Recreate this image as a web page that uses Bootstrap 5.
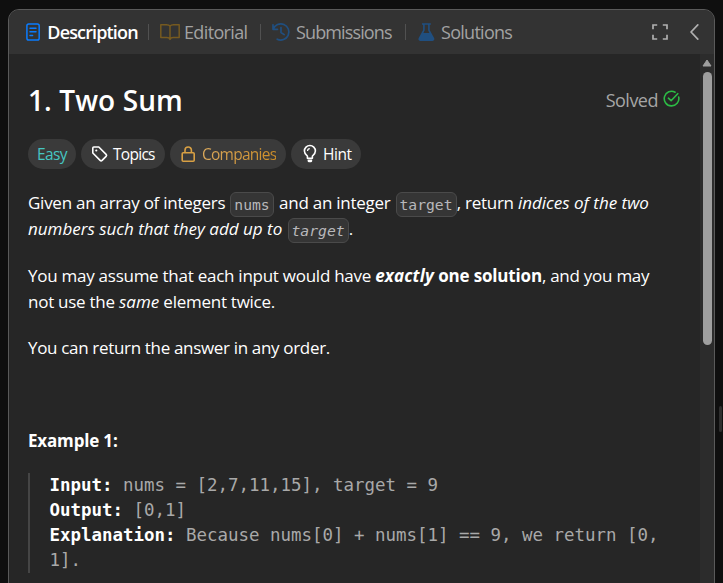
<!DOCTYPE html>
<html lang="en" data-bs-theme="dark">
<head>
<meta charset="utf-8">
<meta name="viewport" content="width=device-width, initial-scale=1">
<title>Two Sum</title>
<link href="https://cdn.jsdelivr.net/npm/bootstrap@5.3.0/dist/css/bootstrap.min.css" rel="stylesheet">
<script src="https://cdn.jsdelivr.net/npm/bootstrap@5.3.0/dist/js/bootstrap.bundle.min.js" defer></script>
<style>
  body { background: #0f0f0f; font-family: "Open Sans", "Noto Sans", sans-serif; color: #f5f5f5; height: 583px; }
  .frame { height: 583px; padding: 9px 0 0 8px; }
  .panel { width: 707px; height: 600px; background: #262626; border: 1px solid #5a5a5a; border-radius: 11px; }
  .tabs { height: 44px; flex: none; background: #333; padding: 0 11px 0 15px; }
  .tab { height: 44px; font-size: 18px; line-height: 44px; color: #a2a2a2; white-space: nowrap; }
  .tab.current { color: #fff; font-weight: 600; }
  .tab svg { flex: none; }
  .tab-description { width: 124px; letter-spacing: -.85px; }
  .tab-editorial { width: 111px; padding-left: 10px; letter-spacing: -.64px; }
  .tab-submissions { width: 144px; padding-left: 10px; letter-spacing: -.87px; }
  .tab-solutions { padding-left: 11px; letter-spacing: -.72px; }
  .sep { width: 1px; height: 16px; background: #515151; flex: none; }
  .content-col { padding: 0 0 0 19px; width: 691px; flex: none; }
  .title-row { padding: 28px 20px 0 0; }
  .track { width: 14px; background: #2c2c2c; padding-top: 5px; flex: none; }
  .thumb { width: 9px; height: 273px; margin-top: 5px; border-radius: 5px; background: #9f9f9f; }
  .heading { font-size: 28px; line-height: 36px; font-weight: 650; letter-spacing: .1px; }
  .solved { font-size: 18px; line-height: 24px; letter-spacing: -.5px; color: #a5a5a5; }
  .solved svg { margin: -4px 0 0 5px; }
  .chips { gap: 5px; margin-top: 21px; }
  .chip { height: 30px; border-radius: 15px; background: #3a3a3a; font-size: 15.5px; line-height: 31px; white-space: nowrap; color: #fff; padding-left: 10px; }
  .chip-easy { width: 48px; padding-left: 9px; color: #46c6c2; letter-spacing: -.6px; }
  .chip-topics { width: 84px; letter-spacing: -.72px; }
  .chip-companies { width: 116px; letter-spacing: -.75px; }
  .chip-hint { width: 70px; letter-spacing: -.47px; }
  .gold { color: transparent; background: linear-gradient(90deg, #dcaa5c, #cd8d27); -webkit-background-clip: text; background-clip: text; }
  .prose { margin-top: 21px; font-size: 17px; line-height: 26.2px; white-space: nowrap; letter-spacing: -.26px; color: #fff; }
  .prose p { margin-bottom: 20.3px; }
  .prose em { letter-spacing: 0; }
  .prose b { letter-spacing: -.17px; }
  .prose b em { letter-spacing: .15px; }
  .prose .token { display: inline-block; height: 25px; padding: 0 3px; border: 1px solid #4a4a4a; border-radius: 6px; background: #353535; color: #b8b8bb; font: 14.7px/24px "DejaVu Sans Mono", monospace; letter-spacing: 0; vertical-align: -1px; margin: -3px .1px -3px .9px; }
  .prose .gap-after { margin-right: 1.2px; }
  .prose em .token { font-style: italic; }
  .sample { border-left: 2px solid #454545; padding-left: 19.5px; margin: 0; font: 17.46px/25px "DejaVu Sans Mono", monospace; color: #a9a9a9; overflow: visible; }
  .sample b { color: #fff; }
  .grip { width: 3px; height: 26px; margin: 397px 0 0 4px; border-radius: 2px; background: #2e2e2e; }
</style>
</head>
<body class="overflow-hidden">
<div class="frame d-flex overflow-hidden">
  <main class="panel d-flex flex-column overflow-hidden flex-shrink-0">
    <nav class="tabs d-flex align-items-center">
      <a class="tab tab-description current d-flex align-items-center text-decoration-none">
        <svg width="18" height="20" viewBox="0 0 18 20" fill="none" stroke="#0a7cff" stroke-width="1.5" stroke-linecap="round"><rect x="2.9" y="1.9" width="12.3" height="16.2" rx="1.8"/><path d="M6 6.2h6M6 9.8h6M6 13.4h2.6"/></svg>
        <span style="padding-left:5.3px">Description</span></a>
      <span class="sep"></span>
      <a class="tab tab-editorial d-flex align-items-center text-decoration-none">
        <svg width="22" height="20" viewBox="0 0 22 20" fill="none" stroke="#765a20" stroke-width="1.5" stroke-linejoin="round"><path d="M11 4.2C10.3 3 9 2.7 7.4 2.7H1.8v12.9h6c1.6 0 2.6.4 3.2 1.8.6-1.4 1.6-1.8 3.2-1.8h6V2.7h-5.6c-1.6 0-2.9.3-3.6 1.5zM11 4.2v13.2"/></svg>
        <span style="padding-left:3px">Editorial</span></a>
      <span class="sep"></span>
      <a class="tab tab-submissions d-flex align-items-center text-decoration-none">
        <svg width="20" height="20" viewBox="0 0 20 20" fill="none" stroke="#204f80" stroke-width="1.7" stroke-linecap="round" stroke-linejoin="round"><path d="M2 2.8v4.5h4.5M2.2 7.1A8.1 8.1 0 1 1 6.2 17.2M10 5.6v4.9l3.2 2.1"/></svg>
        <span style="padding-left:5px">Submissions</span></a>
      <span class="sep"></span>
      <a class="tab tab-solutions d-flex align-items-center text-decoration-none">
        <svg width="19" height="20" viewBox="0 0 19 20"><path d="M5 1.2h8.8v1.5h-1.1v5.2l4.4 8.2c.7 1.4 0 2.8-1.5 2.8H3.2c-1.5 0-2.2-1.4-1.5-2.8l4.4-8.2V2.7H5z" fill="#204f80"/><path d="M7.7 2.7h3.4v5.6l1.3 2.6h-6l1.3-2.6z" fill="#333"/></svg>
        <span style="padding-left:5px">Solutions</span></a>
      <div class="ms-auto d-flex align-items-center">
        <svg width="18" height="18" viewBox="0 0 18 18" fill="none" stroke="#b0b0b0" stroke-width="1.7"><path d="M2 6.2V2h4.2M11.8 2H16v4.2M16 11.8V16h-4.2M6.2 16H2v-4.2"/></svg>
        <svg class="ms-3" width="18" height="18" viewBox="0 0 18 18" fill="none" stroke="#b0b0b0" stroke-width="1.7" stroke-linecap="round" stroke-linejoin="round"><path d="M12.8 1.8 6 9l6.8 7.2"/></svg>
      </div>
    </nav>
    <div class="d-flex flex-grow-1">
      <section class="content-col">
        <header class="title-row d-flex align-items-center">
          <h1 class="heading m-0">1. Two Sum</h1>
          <div class="solved ms-auto d-flex align-items-center"><span>Solved</span>
            <svg width="17" height="17" viewBox="0 0 17 17" fill="none" stroke="#2cbb45" stroke-width="1.6" stroke-linecap="round" stroke-linejoin="round"><path d="M15.7 7.1a7.3 7.3 0 1 1-3.6-4.9M5.4 8.2l2.7 2.5 6.6-7"/></svg>
          </div>
        </header>
        <div class="chips d-flex">
          <span class="chip chip-easy">Easy</span>
          <span class="chip chip-topics d-flex align-items-center">
            <svg width="18" height="18" viewBox="0 0 18 18" fill="none" stroke="#fff" stroke-width="1.6" stroke-linejoin="round"><path d="M1.8 3v5l7.3 7.4c.7.7 1.3.7 2 0l4-4c.7-.7.7-1.3 0-2L7.8 2H2.8c-.6 0-1 .4-1 1z"/><circle cx="5.3" cy="5.5" r="1.1" fill="#fff" stroke="none"/></svg>
            <span style="padding-left:4px">Topics</span></span>
          <span class="chip chip-companies d-flex align-items-center">
            <svg width="17" height="18" viewBox="0 0 17 18" fill="none" stroke="#d8a044" stroke-width="1.6"><rect x="2.2" y="7.7" width="12" height="8.5" rx="1"/><path d="M5 7.5V5.2a3.2 3.2 0 0 1 6.4 0v2.3"/></svg>
            <span class="gold" style="margin-left:5px">Companies</span></span>
          <span class="chip chip-hint d-flex align-items-center">
            <svg width="18" height="20" viewBox="0 0 18 20" fill="none" stroke="#fff" stroke-width="1.6" stroke-linejoin="round"><path d="M6.4 14.2v-2.1C4.6 10.7 3.4 9.3 3.4 7a5.5 5.5 0 0 1 11 0c0 2.3-1.2 3.7-3 5.1v2.1z"/><path d="M6.5 7a2.4 2.4 0 0 1 2.3-2.3" stroke-width="1.2"/><path d="M6.6 15.5h4.6v1.2c0 1-.8 1.6-2.3 1.6s-2.3-.6-2.3-1.6z" fill="#fff" stroke="none"/></svg>
            <span style="padding-left:4px">Hint</span></span>
        </div>
        <div class="prose">
          <p>Given an array of integers <span class="token gap-after">nums</span> and an integer <span class="token">target</span>, return <em>indices of the two</em><br>
          <em>numbers such that they add up to <span class="token">target</span></em>.</p>
          <p>You may assume that each input would have <b><em>exactly</em> one solution</b>, and you may<br>
          not use the <em>same</em> element twice.</p>
          <p><span style="letter-spacing:-.33px">You can return the answer in any order.</span></p>
          <p>&nbsp;</p>
          <p class="mb-0" style="padding-bottom:18px"><b>Example 1:</b></p>
        </div>
<pre class="sample"><b>Input:</b> nums = [2,7,11,15], target = 9
<b>Output:</b> [0,1]
<b>Explanation:</b> Because nums[0] + nums[1] == 9, we return [0,
1].</pre>
      </section>
      <aside class="track d-flex flex-column align-items-center">
        <svg width="10" height="8" viewBox="0 0 10 8"><path d="M5 1 9 7H1z" fill="#9f9f9f" stroke="#9f9f9f" stroke-linejoin="round"/></svg>
        <div class="thumb"></div>
      </aside>
    </div>
  </main>
  <div class="grip"></div>
</div>
</body>
</html>
